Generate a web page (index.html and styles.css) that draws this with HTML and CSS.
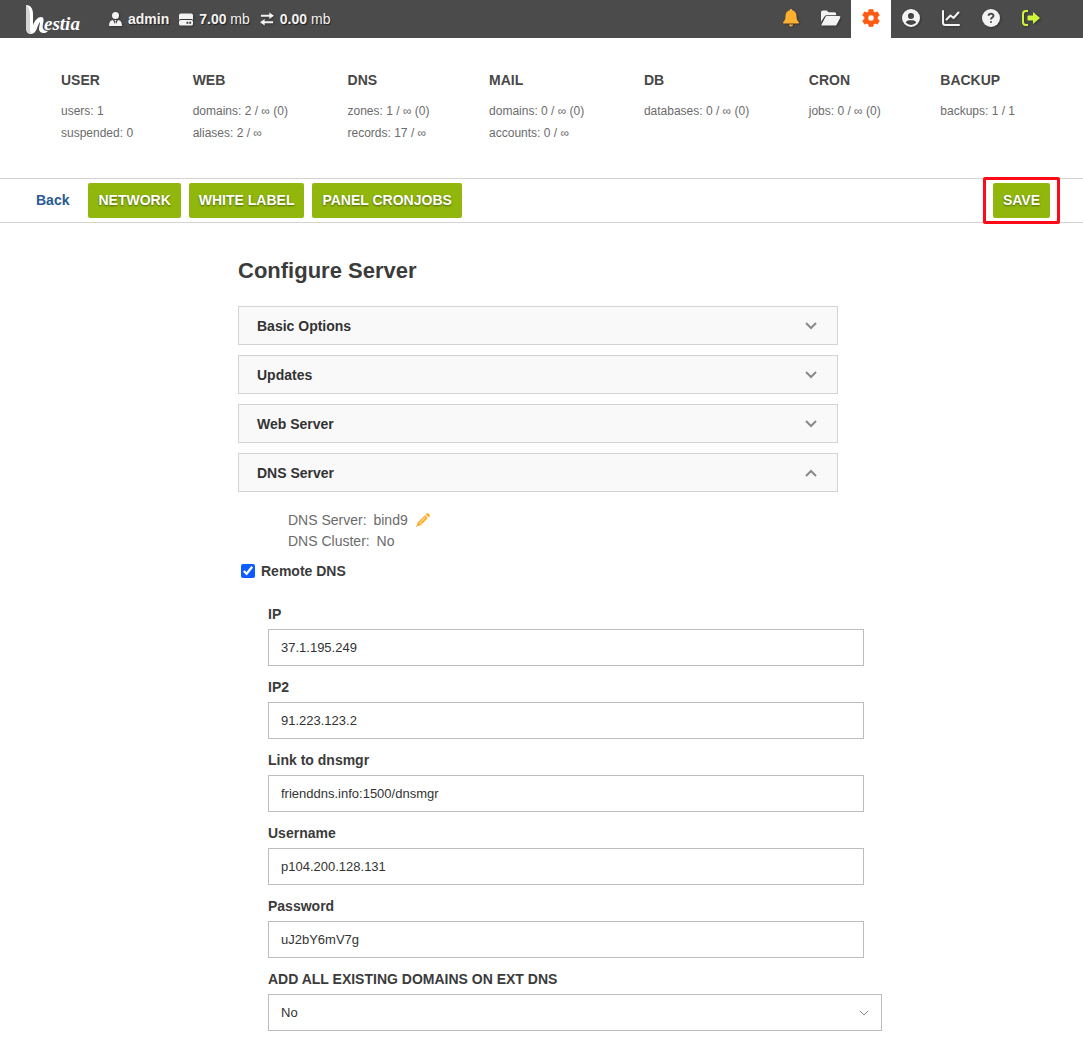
FILE: index.html
```html
<!DOCTYPE html>
<html lang="en">
<head>
    <meta charset="UTF-8">
    <meta name="viewport" content="width=device-width, initial-scale=1.0">
    <title>Configure Server - Hestia</title>
    <link rel="stylesheet" href="styles.css">
</head>
<body>
    <header class="topbar">
        <a class="logo" href="#" aria-label="Hestia">
            <svg width="56" height="36" viewBox="0 0 56 36">
                <path fill="#fff" d="M1 4c5 0 7 4 7 9v11c2-5 5-8 8-8 3 0 3 3 2 7s0 7 5 7c-2 3-9 3-9-2 0-3 1-5 1-7-3 3-3 12-9 12-4 0-5-3-5-7z"/>
                <path fill="#d4d4d4" d="M1 4c3 2 4 5 4 10v12c0 3 0 5 2 7-4 0-6-3-6-7z"/>
                <text class="logo-text" x="19" y="29">estia</text>
            </svg>
        </a>
        <div class="usage">
            <span class="usage-item">
                <svg width="13" height="14" viewBox="0 0 13 14"><circle cx="6.5" cy="3.5" r="3.5"/><path d="M0 14c0-4 1.500-6 4-6l2 4 .3-2.500L5.500 8h2l-.8 1.500L7 12l2-4c2.500 0 4 2 4 6z"/></svg>
                <b>admin</b>
            </span>
            <span class="usage-item">
                <svg width="14" height="13" viewBox="0 0 15 13"><path d="M2 0h11q2 0 2 2v5q-1-1-2-1H2Q1 6 0 7V2q0-2 2-2z"/><path fill-rule="evenodd" d="M2 7h11q2 0 2 2v2q0 2-2 2H2q-2 0-2-2V9q0-2 2-2zm6 2v2h2V9zm3 0v2h2V9z"/></svg>
                <span><b>7.00</b> mb</span>
            </span>
            <span class="usage-item">
                <svg width="14" height="14" viewBox="0 0 15 14"><path d="M10 0l5 3.500L10 7V4.500H1v-2h9zM5 7v2.500h9v2H5V14l-5-3.500z"/></svg>
                <span><b>0.00</b> mb</span>
            </span>
        </div>
        <nav class="menu">
            <a class="menu-link bell" href="#" aria-label="Notifications">
                <svg width="16" height="18" viewBox="0 0 16 18"><path d="M8 0c.8 0 1.200.5 1.200 1.300C12 2 13.500 4 13.500 7c0 3 .5 4.500 2.200 6 .6.700.1 1.500-.7 1.500H1c-.8 0-1.300-.8-.7-1.500C2 11.500 2.500 10 2.500 7c0-3 1.500-5 4.300-5.700C6.800.500 7.200 0 8 0zM6 15.500h4a2 2 0 0 1-4 0z"/></svg>
            </a>
            <a class="menu-link" href="#" aria-label="Files">
                <svg width="20" height="16" viewBox="0 0 21 16"><path d="M0 12V2q0-2 2-2h4l2 2h6q2 0 2 2v1H6Q4.500 5 3.700 6.300z"/><path d="M6 6h13q2 0 1.200 1.700l-3.700 7Q16 16 14.500 16H1.200Q0 16 .6 14.700l3.900-7.500Q5 6 6 6z"/></svg>
            </a>
            <a class="menu-link active" href="#" aria-label="Server settings">
                <svg width="18" height="18" viewBox="0 0 18 18"><path fill-rule="evenodd" d="M7 .2h4l.6 2.600 1.400.8 2.500-.8 2 3.400-1.900 1.900v1.800l1.900 1.900-2 3.400-2.500-.8-1.400.8-.6 2.600H7l-.6-2.600-1.400-.8-2.500.8-2-3.400 1.900-1.900V8.100L.5 6.200l2-3.400 2.500.8 1.400-.8zM9 6a3 3 0 1 0 0 6 3 3 0 0 0 0-6z" stroke-linejoin="round" stroke="currentColor" stroke-width=".4"/></svg>
            </a>
            <a class="menu-link" href="#" aria-label="Profile">
                <svg width="18" height="18" viewBox="0 0 18 18"><path fill-rule="evenodd" d="M9 0a9 9 0 1 1 0 18A9 9 0 0 1 9 0zm0 4a3 3 0 1 0 0 6 3 3 0 0 0 0-6zm-1.500 7.300c-2 0-3.300 1-3.700 2.300a7 7 0 0 0 10.400 0c-.4-1.300-1.700-2.300-3.700-2.300z"/></svg>
            </a>
            <a class="menu-link" href="#" aria-label="Statistics">
                <svg class="line" width="18" height="16" viewBox="0 0 18 16"><path d="M1 1v11.500Q1 15 3.500 15H17M4.500 9.500l4-4 3 2.500 5-5.500"/></svg>
            </a>
            <a class="menu-link" href="#" aria-label="Help">
                <svg width="18" height="18" viewBox="0 0 18 18"><circle cx="9" cy="9" r="9"/><path class="mark" d="M6.600 6.800C6.600 4 11.500 4 11.500 6.800 11.500 8.600 9 8.500 9 10.500M9 12.200v1.600"/></svg>
            </a>
            <a class="menu-link exit" href="#" aria-label="Log out">
                <svg width="18" height="16" viewBox="0 0 18 16"><path d="M6 0v2H4Q2 2 2 4v8q0 2 2 2h2v2H4q-4 0-4-4V4q0-4 4-4zM11 2l7 6-7 6v-3.500H6.500q-1 0-1-1v-3q0-1 1-1H11z"/></svg>
            </a>
        </nav>
    </header>

    <section class="stats">
        <div class="stat">
            <h2>USER</h2>
            <p>users: 1</p>
            <p>suspended: 0</p>
        </div>
        <div class="stat">
            <h2>WEB</h2>
            <p>domains: 2 / ∞ (0)</p>
            <p>aliases: 2 / ∞</p>
        </div>
        <div class="stat">
            <h2>DNS</h2>
            <p>zones: 1 / ∞ (0)</p>
            <p>records: 17 / ∞</p>
        </div>
        <div class="stat">
            <h2>MAIL</h2>
            <p>domains: 0 / ∞ (0)</p>
            <p>accounts: 0 / ∞</p>
        </div>
        <div class="stat">
            <h2>DB</h2>
            <p>databases: 0 / ∞ (0)</p>
        </div>
        <div class="stat">
            <h2>CRON</h2>
            <p>jobs: 0 / ∞ (0)</p>
        </div>
        <div class="stat">
            <h2>BACKUP</h2>
            <p>backups: 1 / 1</p>
        </div>
    </section>

    <div class="toolbar">
        <a class="back" href="#">Back</a>
        <button class="btn" type="button">NETWORK</button>
        <button class="btn" type="button">WHITE LABEL</button>
        <button class="btn" type="button">PANEL CRONJOBS</button>
        <div class="save">
            <button class="btn" type="submit" form="server-form">SAVE</button>
        </div>
    </div>

    <main class="content">
        <h1>Configure Server</h1>
        <form id="server-form">
            <div class="sections">
                <button class="section" type="button">Basic Options
                    <svg class="chevron" width="12" height="8" viewBox="0 0 12 8"><path d="M1 1l5 5 5-5"/></svg>
                </button>
                <button class="section" type="button">Updates
                    <svg class="chevron" width="12" height="8" viewBox="0 0 12 8"><path d="M1 1l5 5 5-5"/></svg>
                </button>
                <button class="section" type="button">Web Server
                    <svg class="chevron" width="12" height="8" viewBox="0 0 12 8"><path d="M1 1l5 5 5-5"/></svg>
                </button>
                <button class="section" type="button" aria-expanded="true">DNS Server
                    <svg class="chevron" width="12" height="8" viewBox="0 0 12 8"><path d="M1 7l5-5 5 5"/></svg>
                </button>
            </div>

            <div class="info">
                <p>DNS Server: <span>bind9</span>
                    <a class="edit" href="#" aria-label="Edit DNS server"><svg width="14" height="14" viewBox="0 0 14 14"><path fill-rule="evenodd" d="M9.500 1.500l1-1q1-1 2 0l1 1q1 1 0 2l-1 1zM8.800 2.200l3 3L5 12 0 14l2-5zM3 9.500l1.500.3.300 1.200.7-.6-.3-.8-1.300-.6zM8.800 4.300L5 8.100l.4.400 3.800-3.800z"/></svg></a>
                </p>
                <p>DNS Cluster: <span>No</span></p>
            </div>

            <div class="check">
                <input type="checkbox" id="remote-dns" checked>
                <label for="remote-dns">Remote DNS</label>
            </div>

            <div class="fields">
                <div class="field">
                    <label for="ip">IP</label>
                    <input type="text" id="ip" value="37.1.195.249">
                </div>
                <div class="field">
                    <label for="ip2">IP2</label>
                    <input type="text" id="ip2" value="91.223.123.2">
                </div>
                <div class="field">
                    <label for="link">Link to dnsmgr</label>
                    <input type="text" id="link" value="frienddns.info:1500/dnsmgr">
                </div>
                <div class="field">
                    <label for="username">Username</label>
                    <input type="text" id="username" value="p104.200.128.131">
                </div>
                <div class="field">
                    <label for="password">Password</label>
                    <input type="text" id="password" value="uJ2bY6mV7g">
                </div>
                <div class="field">
                    <label for="add-domains">ADD ALL EXISTING DOMAINS ON EXT DNS</label>
                    <div class="select-wrap">
                        <select id="add-domains">
                            <option>No</option>
                            <option>Yes</option>
                        </select>
                        <svg class="chevron" width="10" height="6" viewBox="0 0 10 6"><path d="M1 1l4 4 4-4"/></svg>
                    </div>
                </div>
            </div>
        </form>
    </main>
</body>
</html>
```
FILE: styles.css
```css
* {
    box-sizing: border-box;
}
body {
    margin: 0;
    background: #fff;
    color: #3b3b3b;
    font-family: "Liberation Sans", Arial, sans-serif;
    font-size: 14px;
}
h1, h2, p {
    margin: 0;
}
a {
    text-decoration: none;
}
svg {
    fill: currentColor;
    flex-shrink: 0;
}

/* top bar */
.topbar {
    display: flex;
    align-items: center;
    height: 38px;
    padding: 0 32px 0 25px;
    background: #4b4b4b;
    color: #f3f3f3;
}
.logo {
    display: flex;
    color: #fff;
}
.logo-text {
    font-family: "Liberation Serif", serif;
    font-size: 19px;
    font-style: italic;
    font-weight: bold;
}
.usage {
    display: flex;
    gap: 10px;
    margin-left: 28px;
    text-shadow: 1px 1px 1px #222;
}
.usage-item {
    display: flex;
    align-items: center;
    gap: 6px;
}
.usage-item svg, .menu-link svg {
    filter: drop-shadow(1px 1px 1px #333);
}
.menu {
    display: flex;
    margin-left: auto;
}
.menu-link {
    display: flex;
    align-items: center;
    justify-content: center;
    width: 40px;
    height: 38px;
    padding-bottom: 2px;
    color: #f3f3f3;
}
.menu-link.active {
    background: #fff;
    color: #ff5a12;
}
.menu-link.active svg {
    filter: none;
}
.menu-link.bell {
    color: #ffb02e;
}
.menu-link.exit {
    color: #cdf53b;
}
.line {
    fill: none;
    stroke: currentColor;
    stroke-width: 2;
    stroke-linecap: round;
    stroke-linejoin: round;
}
.mark {
    fill: none;
    stroke: #4b4b4b;
    stroke-width: 2;
}

/* account statistics */
.stats {
    display: flex;
    justify-content: space-between;
    height: 140px;
    padding: 32px 68px 0 61px;
    color: #6b6b6b;
    font-size: 12px;
    line-height: 22px;
}
.stat h2 {
    margin-bottom: 10px;
    color: #484848;
    font-size: 14px;
    line-height: 20px;
}

/* actions */
.toolbar {
    display: flex;
    align-items: center;
    gap: 8px;
    height: 45px;
    padding: 0 33px 0 36px;
    border: solid #d3d3d3;
    border-width: 1px 0;
}
.back {
    margin-right: 11px;
    padding-bottom: 2px;
    color: #2a5a92;
    font-weight: bold;
}
.btn {
    height: 35px;
    padding: 0 10px 2px;
    border: 0;
    border-radius: 2px;
    background: #91b70c;
    color: #fff;
    font: bold 14px "Liberation Sans", Arial, sans-serif;
    text-shadow: 0 1px 2px #4d6400;
    cursor: pointer;
}
.save {
    position: relative;
    margin-left: auto;
}
.save::after {
    content: "";
    position: absolute;
    inset: -6px -10px;
    border: 3px solid #ff0a16;
    border-radius: 2px;
    pointer-events: none;
}

/* form */
.content {
    max-width: 681px;
    margin: 0 auto;
    padding: 33px 0 15px 37px;
}
h1 {
    margin-bottom: 20px;
    font-size: 22px;
    line-height: 30px;
}
.sections {
    display: flex;
    flex-direction: column;
    gap: 10px;
    max-width: 600px;
}
.section {
    display: flex;
    align-items: center;
    justify-content: space-between;
    height: 39px;
    padding: 0 20px 0 18px;
    border: 1px solid #d3d3d3;
    background: #f9f9f9;
    color: #333;
    font: bold 14px "Liberation Sans", Arial, sans-serif;
    text-align: left;
    cursor: pointer;
}
.chevron {
    fill: none;
    stroke: #8a8a8a;
    stroke-width: 2;
}
.info {
    margin: 18px 0 0 50px;
    color: #6b6b6b;
    line-height: 21px;
}
.info span {
    margin-left: 3px;
}
.edit {
    margin-left: 4px;
    color: #ffb02e;
}
.edit svg {
    vertical-align: -2px;
}
.check {
    display: flex;
    align-items: center;
    gap: 6px;
    margin-top: 9px;
    height: 20px;
    font-weight: bold;
}
.check input {
    width: 14px;
    height: 14px;
    margin: 0 0 0 3px;
    accent-color: #0d5cff;
}
.fields {
    display: flex;
    flex-direction: column;
    gap: 11px;
    margin: 23px 0 0 30px;
}
.field label {
    display: block;
    margin-bottom: 5px;
    font-weight: bold;
    line-height: 20px;
}
.field input, .field select {
    display: block;
    width: 100%;
    height: 37px;
    padding: 0 12px;
    border: 1px solid #bdbdbd;
    border-radius: 0;
    background: #fff;
    color: #333;
    font: 13px "Liberation Sans", Arial, sans-serif;
}
.field input {
    max-width: 596px;
}
.field select {
    appearance: none;
}
.select-wrap {
    position: relative;
}
.select-wrap .chevron {
    position: absolute;
    top: 16px;
    right: 13px;
    stroke-width: 1;
}
```
